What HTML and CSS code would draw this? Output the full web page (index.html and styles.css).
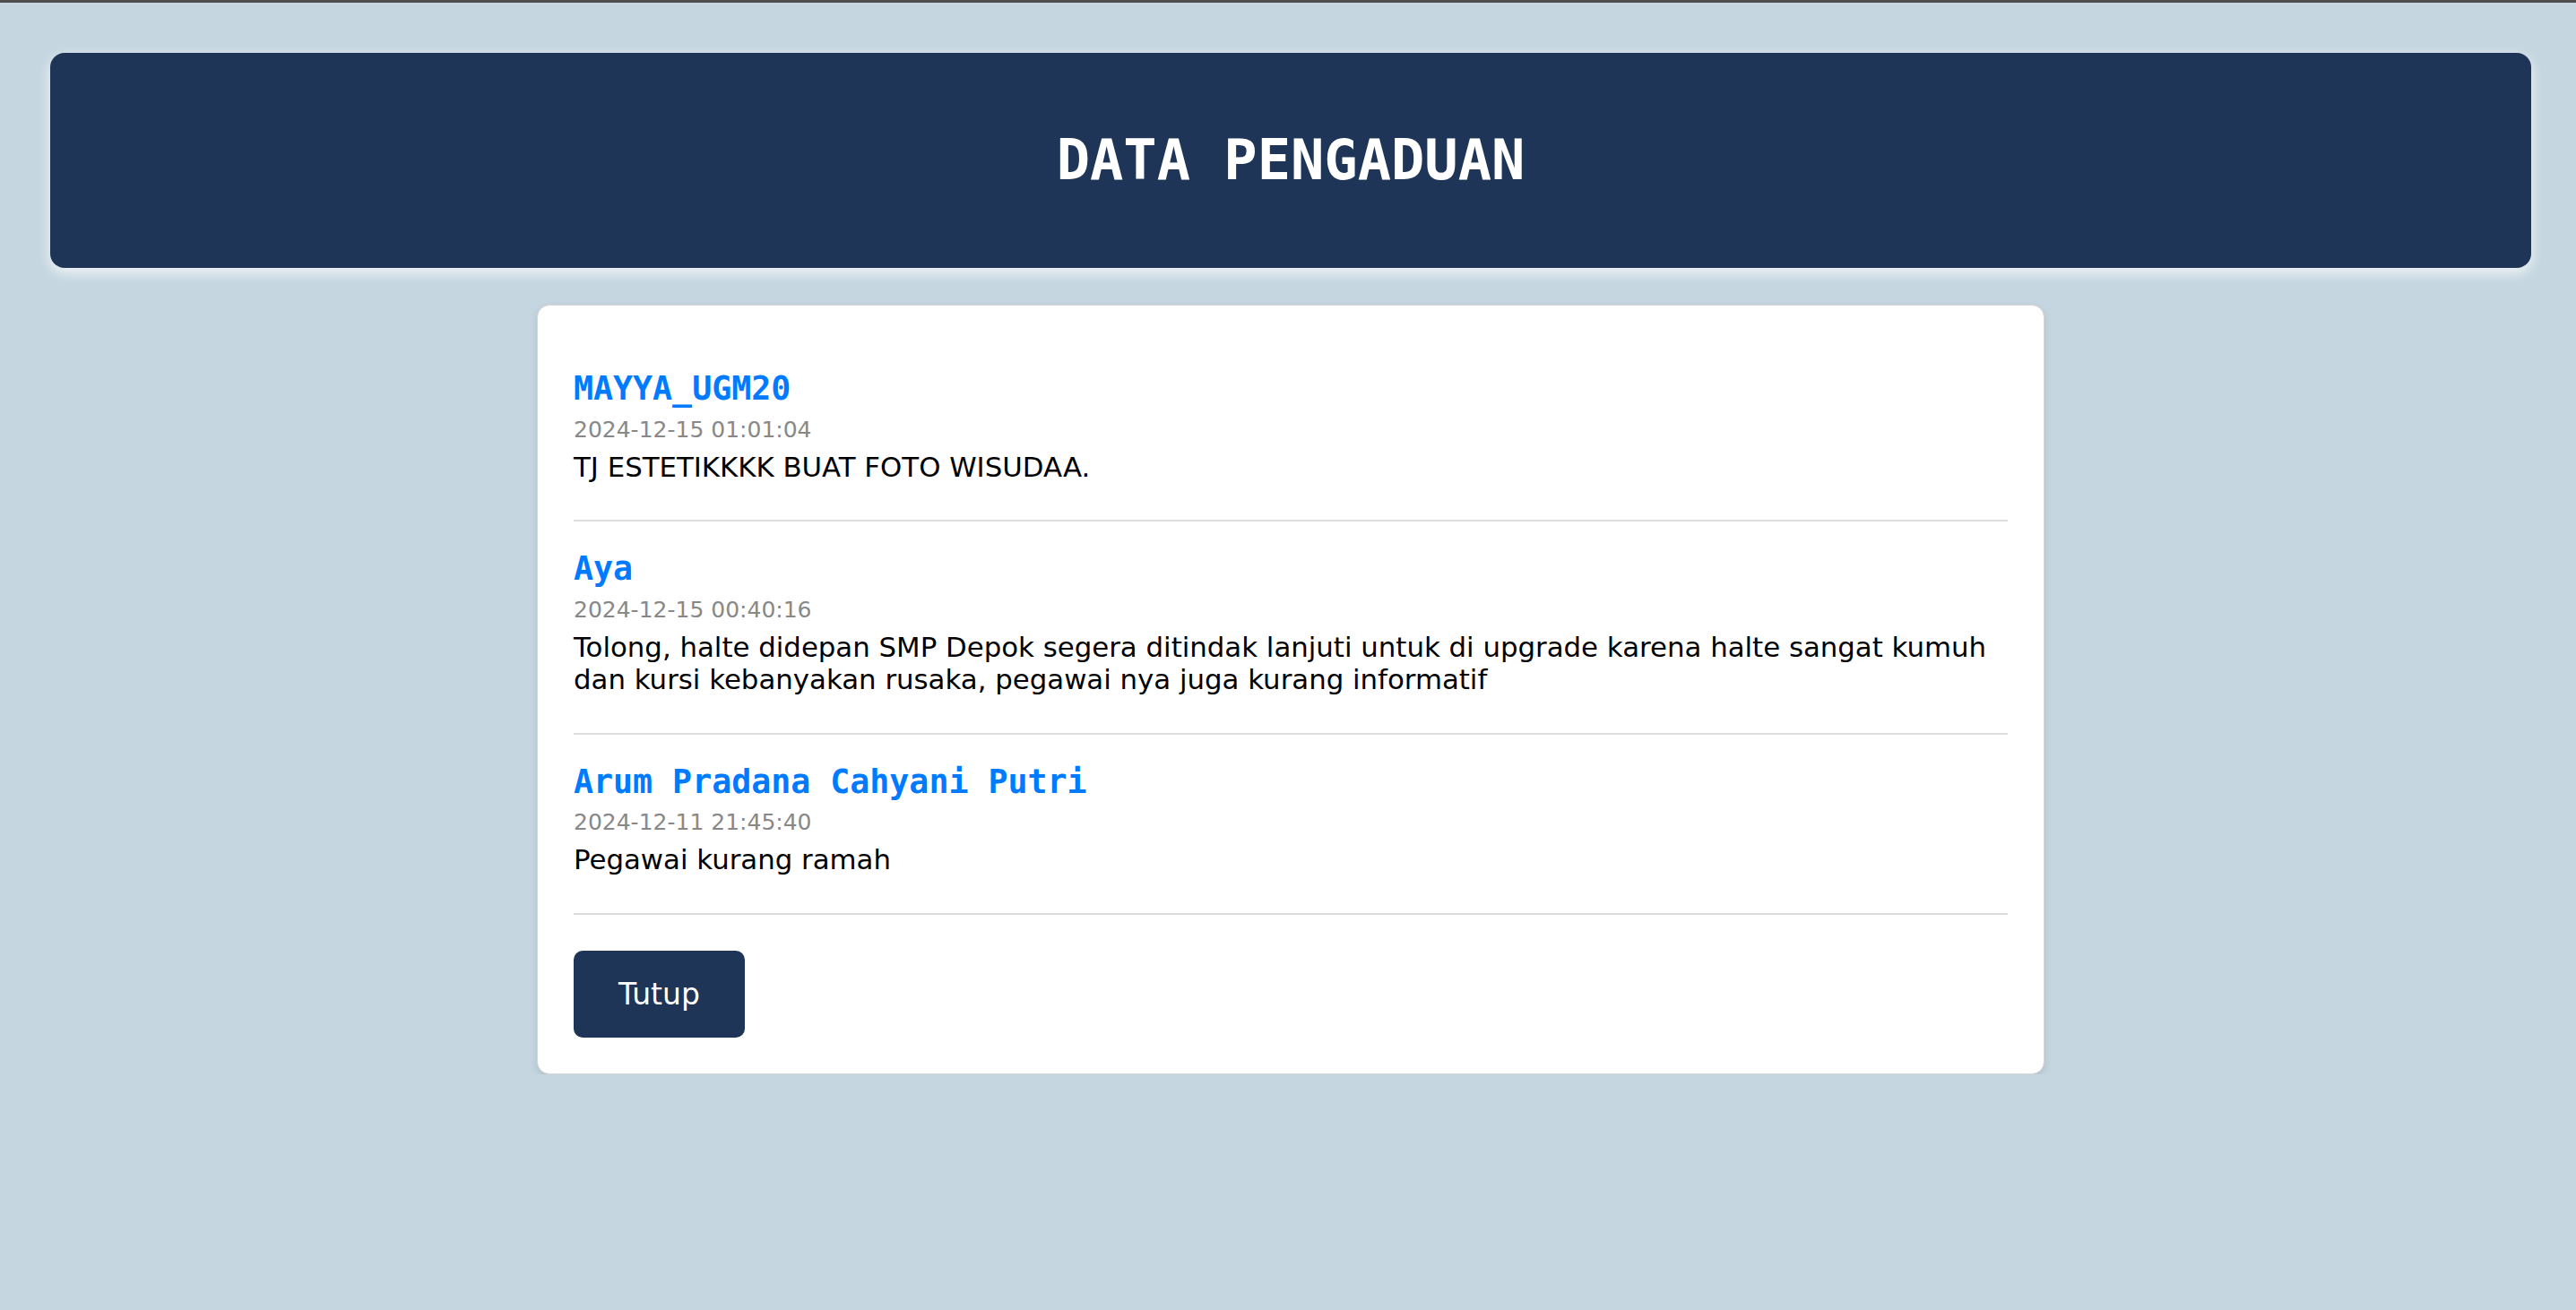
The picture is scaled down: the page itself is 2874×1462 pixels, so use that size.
FILE: index.html
```html
<!DOCTYPE html>
<html lang="id">
<head>
<meta charset="utf-8">
<title>Data Pengaduan</title>
<link rel="stylesheet" href="styles.css">
</head>
<body>
<div class="page">
  <header class="banner">
    <h1 class="banner-title">DATA PENGADUAN</h1>
  </header>
  <main class="card">
    <div class="complaint">
      <h3 class="complaint-name">MAYYA_UGM20</h3>
      <small class="complaint-time">2024-12-15 01:01:04</small>
      <p class="complaint-text">TJ ESTETIKKKK BUAT FOTO WISUDAA.</p>
    </div>
    <div class="complaint">
      <h3 class="complaint-name">Aya</h3>
      <small class="complaint-time">2024-12-15 00:40:16</small>
      <p class="complaint-text">Tolong, halte didepan SMP Depok segera ditindak lanjuti untuk di upgrade karena halte sangat kumuh dan kursi kebanyakan rusaka, pegawai nya juga kurang informatif</p>
    </div>
    <div class="complaint">
      <h3 class="complaint-name">Arum Pradana Cahyani Putri</h3>
      <small class="complaint-time">2024-12-11 21:45:40</small>
      <p class="complaint-text">Pegawai kurang ramah</p>
    </div>
    <button class="close-btn" type="button">Tutup</button>
  </main>
</div>
</body>
</html>
```
FILE: styles.css
```css
html {
  background: #c5d6e0;
}

body {
  margin: 0;
  border-top: 3px solid #4e4e4e;
  background: #c5d6e0;
  font-family: "DejaVu Sans", Verdana, sans-serif;
}

.page {
  padding: 56px 50px 0 56px;
}

.banner {
  height: 240px;
  background: #1e3557;
  border-radius: 16px;
  display: flex;
  align-items: center;
  justify-content: center;
  box-shadow: 0 5px 15px rgba(255, 255, 255, 0.8);
}

.banner-title {
  margin: 0;
  font-family: "DejaVu Sans Mono", monospace;
  font-weight: bold;
  font-size: 62px;
  line-height: 1;
  color: #ffffff;
}

.card {
  width: 1682px;
  box-sizing: border-box;
  margin: 41px auto 0;
  padding: 40px;
  background: #ffffff;
  border: 1px solid #d5d5d5;
  border-radius: 14px;
  box-shadow: 0 4px 10px rgba(0, 0, 0, 0.1);
}

.complaint {
  padding: 31px 0 41px;
  border-bottom: 2px solid #dddddd;
}

.complaint-name {
  margin: 0;
  font-family: "DejaVu Sans Mono", monospace;
  font-weight: bold;
  font-size: 36.6px;
  line-height: 44px;
  color: #007bff;
}

.complaint-time {
  display: block;
  margin: 8.5px 0 8px;
  font-size: 25px;
  line-height: 30px;
  color: #888888;
}

.complaint-text {
  margin: 0;
  font-size: 30.8px;
  line-height: 36.6px;
  color: #000000;
}

.close-btn {
  display: block;
  margin-top: 40px;
  height: 97px;
  padding: 0 50px;
  border: none;
  border-radius: 10px;
  background: #1e3557;
  color: #ffffff;
  font-family: "DejaVu Sans", Verdana, sans-serif;
  font-size: 33px;
  cursor: pointer;
}
```
